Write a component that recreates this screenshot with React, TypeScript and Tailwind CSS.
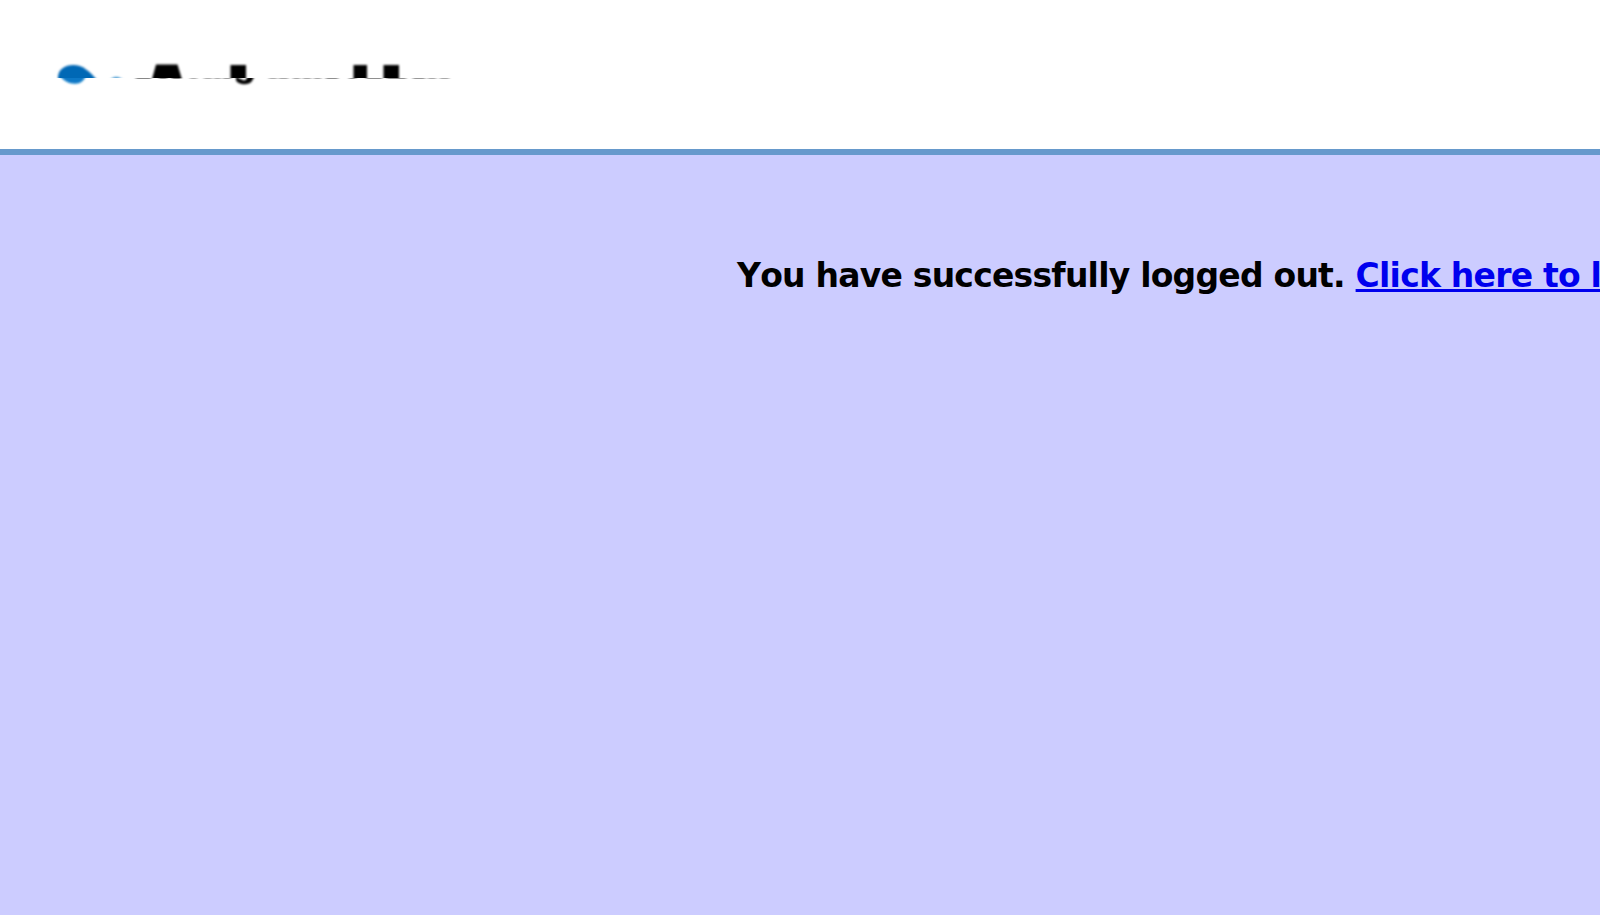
const strokes: [number, number, number][] = [
  [136, 15, 0.75],
  [159, 8, 0.7],
  [172, 9, 0.8],
  [190, 7, 0.5],
  [204, 8, 0.5],
  [214, 7, 0.5],
  [223, 8, 0.6],
  [269, 8, 0.5],
  [279, 9, 0.55],
  [293, 7, 0.55],
  [303, 8, 0.55],
  [314, 7, 0.55],
  [326, 12, 0.7],
  [349, 7, 0.7],
  [366, 16, 0.7],
  [387, 19, 0.7],
  [413, 12, 0.65],
  [428, 8, 0.55],
  [440, 9, 0.55],
];

function Logo() {
  return (
    <svg className="block h-[50px] w-[420px]" viewBox="40 50 420 50" aria-hidden="true">
      <defs>
        <filter id="soft" x="-20%" y="-20%" width="140%" height="140%">
          <feGaussianBlur stdDeviation="1" />
        </filter>
        <filter id="faint" filterUnits="userSpaceOnUse" x="40" y="70" width="420" height="20">
          <feGaussianBlur stdDeviation="1.6 0.6" />
        </filter>
        <clipPath id="upper">
          <rect x="40" y="50" width="420" height="28" />
        </clipPath>
        <clipPath id="lower">
          <rect x="40" y="78" width="420" height="22" />
        </clipPath>
      </defs>
      <g clipPath="url(#upper)">
        <g filter="url(#soft)">
          <path d="M58 82V76C59 69 65 65 73 65C83 65 89 71 97 80V82Z" fill="#0067b5" />
          <path d="M109 81Q116 73 124 81Z" fill="#2d8bcb" />
          <path d="M156 64.5H177.5L183 83H151Z" fill="#020606" />
          <path d="M230.5 65H246V83H230.5Z" fill="#020606" />
          <path d="M353.5 65H367V83H353.5Z" fill="#020606" />
          <path d="M383.5 65H399V83H383.5Z" fill="#020606" />
        </g>
      </g>
      <g clipPath="url(#lower)">
        <g filter="url(#soft)">
          <path d="M58 73C62 80 68 83.7 75 83.7C81 83.7 85 80 87 73Z" fill="#0878c6" />
          <path
            d="M236 75V80.5C239 85.5 249 85.5 252 81L255 75H247.5L246.5 79C245 81 243 80.5 242 79.5L239 78.5Z"
            fill="#020606"
          />
        </g>
        <g filter="url(#faint)" opacity="0.75">
          {strokes.map(([x, width, opacity]) => (
            <rect key={x} x={x} y="77" width={width} height="1.9" fill="#111" opacity={opacity} />
          ))}
        </g>
      </g>
    </svg>
  );
}

export default function App() {
  return (
    <div className="flex h-[915px] w-full flex-col overflow-hidden bg-[#ccccff]">
      <header className="h-[155px] shrink-0 border-b-[6px] border-[#6699cc] bg-white pt-[50px] pl-[40px]">
        <Logo />
      </header>
      <main className="pt-[97px] pl-[737px] font-['DejaVu_Sans',sans-serif] text-[33px] leading-[48px] font-bold tracking-[-0.77px] whitespace-nowrap text-black [font-kerning:none]">
        You have successfully logged out.{' '}
        <a href="#" className="text-[#0000ee] underline decoration-[3px] underline-offset-[2px]">
          Click here to login
        </a>
      </main>
    </div>
  );
}
